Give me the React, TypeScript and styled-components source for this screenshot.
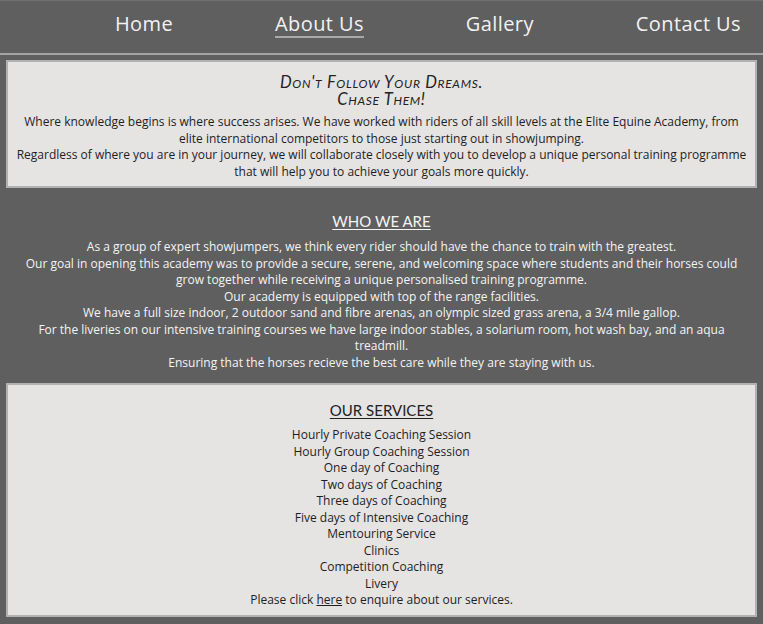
import React from "react";
import styled, { createGlobalStyle } from "styled-components";

const Global = createGlobalStyle`
  html, body { margin: 0; padding: 0; background: #5f5f5f; }
  body { font-family: "Open Sans", "Liberation Sans", sans-serif; }
`;

const Page = styled.div`
  min-height: 624px;
  background: #5f5f5f;
`;

const Nav = styled.nav`
  border-top: 1px solid #707070;
  border-bottom: 2px solid #a3a3a3;
  box-sizing: border-box;
  height: 55px;
  display: flex;
  justify-content: flex-end;
  align-items: flex-start;
  gap: 102px;
  padding: 10px 22px 0 0;
`;

const NavLink = styled.a<{ $active?: boolean }>`
  font-family: "Open Sans", sans-serif;
  font-size: 20px;
  line-height: 25px;
  letter-spacing: 0.4px;
  color: #f2f2f2;
  text-decoration: none;
  border-bottom: 2px solid ${(p) => (p.$active ? "#a9a9a9" : "transparent")};
`;

const Box = styled.section<{ $top: number; $padTop: number; $padBottom: number }>`
  margin: ${(p) => p.$top}px 6px 0;
  background: #e6e3e3;
  border: 2px solid #b1b1b1;
  padding: ${(p) => p.$padTop}px 8px ${(p) => p.$padBottom}px;
  text-align: center;
  color: #1e1e1e;
`;

const Motto = styled.h2`
  margin: 0;
  font-family: Lato, "Liberation Sans", sans-serif;
  font-style: italic;
  font-variant: small-caps;
  font-weight: 400;
  font-size: 16.5px;
  letter-spacing: 0.7px;
  line-height: 16.5px;
  color: #222;
`;

const Text = styled.p<{ $light?: boolean; $top?: number }>`
  margin: ${(p) => p.$top ?? 0}px 0 0;
  font-size: 12px;
  line-height: 16.5px;
  color: ${(p) => (p.$light ? "#f4f4f4" : "#1e1e1e")};
`;

const Section = styled.section`
  margin: 24px 6px 0;
  text-align: center;
  padding: 0 10px;
`;

const Heading = styled.h3<{ $light?: boolean }>`
  margin: 0;
  font-family: Lato, "Liberation Sans", sans-serif;
  font-weight: 400;
  font-size: 15px;
  line-height: 18px;
  text-decoration: underline;
  text-underline-offset: 2px;
  text-decoration-thickness: 1px;
  color: ${(p) => (p.$light ? "#f4f4f4" : "#222")};
`;

const List = styled.ul`
  list-style: none;
  margin: 8px 0 0;
  padding: 0;
  font-size: 12px;
  line-height: 16.5px;
`;

const Item = styled.li``;

const Link = styled.a`
  color: #1e1e1e;
  text-decoration: underline;
`;

const services = [
  "Hourly Private Coaching Session",
  "Hourly Group Coaching Session",
  "One day of Coaching",
  "Two days of Coaching",
  "Three days of Coaching",
  "Five days of Intensive Coaching",
  "Mentouring Service",
  "Clinics",
  "Competition Coaching",
  "Livery",
];

export default function App() {
  return (
    <Page>
      <Global />
      <Nav>
        <NavLink>Home</NavLink>
        <NavLink $active>About Us</NavLink>
        <NavLink>Gallery</NavLink>
        <NavLink>Contact Us</NavLink>
      </Nav>
      <Box $top={5} $padTop={12} $padBottom={6}>
        <Motto>
          Don't Follow Your Dreams.
          <br />
          Chase Them!
        </Motto>
        <Text $top={7}>
          Where knowledge begins is where success arises. We have worked with riders of all skill levels at the Elite Equine Academy, from elite international competitors to those just starting out in showjumping.
          <br />
          Regardless of where you are in your journey, we will collaborate closely with you to develop a unique personal training programme that will help you to achieve your goals more quickly.
        </Text>
      </Box>
      <Section>
        <Heading $light>WHO WE ARE</Heading>
        <Text $light $top={9}>
          As a group of expert showjumpers, we think every rider should have the chance to train with the greatest.
          <br />
          Our goal in opening this academy was to provide a secure, serene, and welcoming space where students and their horses could grow together while receiving a unique personalised training programme.
          <br />
          Our academy is equipped with top of the range facilities.
          <br />
          We have a full size indoor, 2 outdoor sand and fibre arenas, an olympic sized grass arena, a 3/4 mile gallop.
          <br />
          For the liveries on our intensive training courses we have large indoor stables, a solarium room, hot wash bay, and an aqua treadmill.
          <br />
          Ensuring that the horses recieve the best care while they are staying with us.
        </Text>
      </Section>
      <Box $top={12} $padTop={16} $padBottom={6}>
        <Heading>OUR SERVICES</Heading>
        <List>
          {services.map((s) => (
            <Item key={s}>{s}</Item>
          ))}
          <Item>
            Please click <Link>here</Link> to enquire about our services.
          </Item>
        </List>
      </Box>
    </Page>
  );
}
